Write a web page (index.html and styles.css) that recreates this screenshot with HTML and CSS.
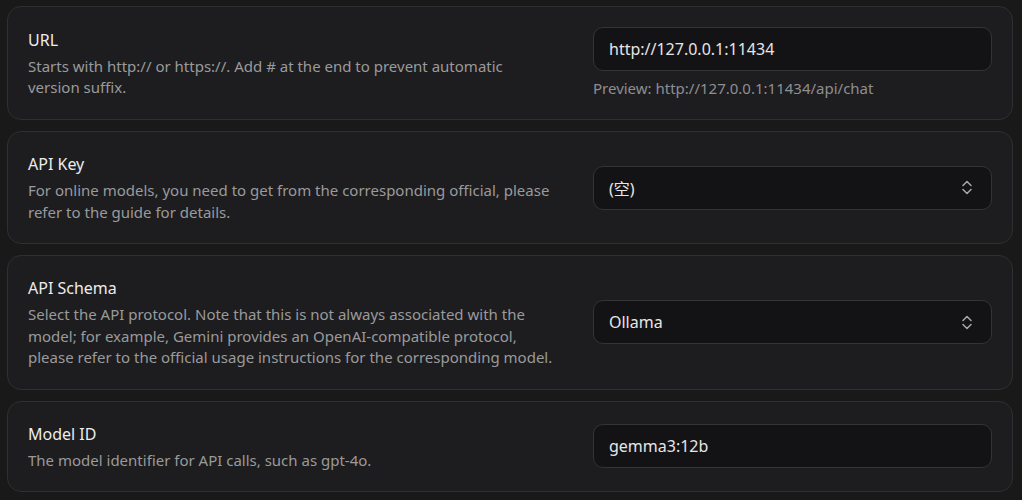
FILE: index.html
```html
<!DOCTYPE html>
<html lang="en">
<head>
<meta charset="utf-8">
<title>Provider settings</title>
<link rel="stylesheet" href="styles.css">
</head>
<body>
<div class="list">
  <div class="card">
    <div class="info">
      <div class="title">URL</div>
      <div class="desc">Starts with http:// or https://. Add # at the end to prevent automatic version suffix.</div>
    </div>
    <div class="control">
      <div class="field"><span class="value">http://127.0.0.1:11434</span></div>
      <div class="hint">Preview: http://127.0.0.1:11434/api/chat</div>
    </div>
  </div>
  <div class="card">
    <div class="info">
      <div class="title">API Key</div>
      <div class="desc">For online models, you need to get from the corresponding official, please refer to the guide for details.</div>
    </div>
    <div class="control">
      <div class="field select"><span class="value">(空)</span>
        <svg class="chev" viewBox="0 0 10 15" width="10" height="15"><path d="M1 5.5L5 1.5l4 4M1 9.5l4 4 4-4" fill="none" stroke="#a8a8ac" stroke-width="1.5" stroke-linecap="round" stroke-linejoin="round"/></svg>
      </div>
    </div>
  </div>
  <div class="card">
    <div class="info">
      <div class="title">API Schema</div>
      <div class="desc">Select the API protocol. Note that this is not always associated with the model; for example, Gemini provides an OpenAI-compatible protocol, please refer to the official usage instructions for the corresponding model.</div>
    </div>
    <div class="control">
      <div class="field select"><span class="value">Ollama</span>
        <svg class="chev" viewBox="0 0 10 15" width="10" height="15"><path d="M1 5.5L5 1.5l4 4M1 9.5l4 4 4-4" fill="none" stroke="#a8a8ac" stroke-width="1.5" stroke-linecap="round" stroke-linejoin="round"/></svg>
      </div>
    </div>
  </div>
  <div class="card">
    <div class="info">
      <div class="title">Model ID</div>
      <div class="desc">The model identifier for API calls, such as gpt-4o.</div>
    </div>
    <div class="control">
      <div class="field"><span class="value">gemma3:12b</span></div>
    </div>
  </div>
</div>
</body>
</html>
```
FILE: styles.css
```css
html, body {
  margin: 0;
  background: #19191a;
  font-family: "Noto Sans", "Noto Sans CJK SC", sans-serif;
}
.list {
  display: flex;
  flex-direction: column;
  gap: 11px;
  padding: 6px 9px 0 7px;
}
.card {
  display: flex;
  align-items: center;
  justify-content: space-between;
  border: 1px solid #2f2f31;
  border-radius: 14px;
  background: #1d1d1f;
  padding: 20px;
}
.info {
  width: 526px;
  display: flex;
  flex-direction: column;
  gap: 4px;
}
.title {
  font-size: 16px;
  line-height: 24px;
  color: #ececec;
}
.desc {
  font-size: 15px;
  line-height: 21.5px;
  color: #9a9a9c;
}
.control {
  width: 399px;
  display: flex;
  flex-direction: column;
  gap: 6px;
}
.field {
  box-sizing: border-box;
  height: 44px;
  border: 1px solid #343437;
  border-radius: 10px;
  background: #131315;
  display: flex;
  align-items: center;
  justify-content: space-between;
  padding: 0 19px 0 15px;
}
.value {
  font-size: 16px;
  color: #e6e6e6;
}
.chev {
  display: block;
}
.hint {
  font-size: 15px;
  line-height: 22px;
  color: #8e8e92;
}
```
